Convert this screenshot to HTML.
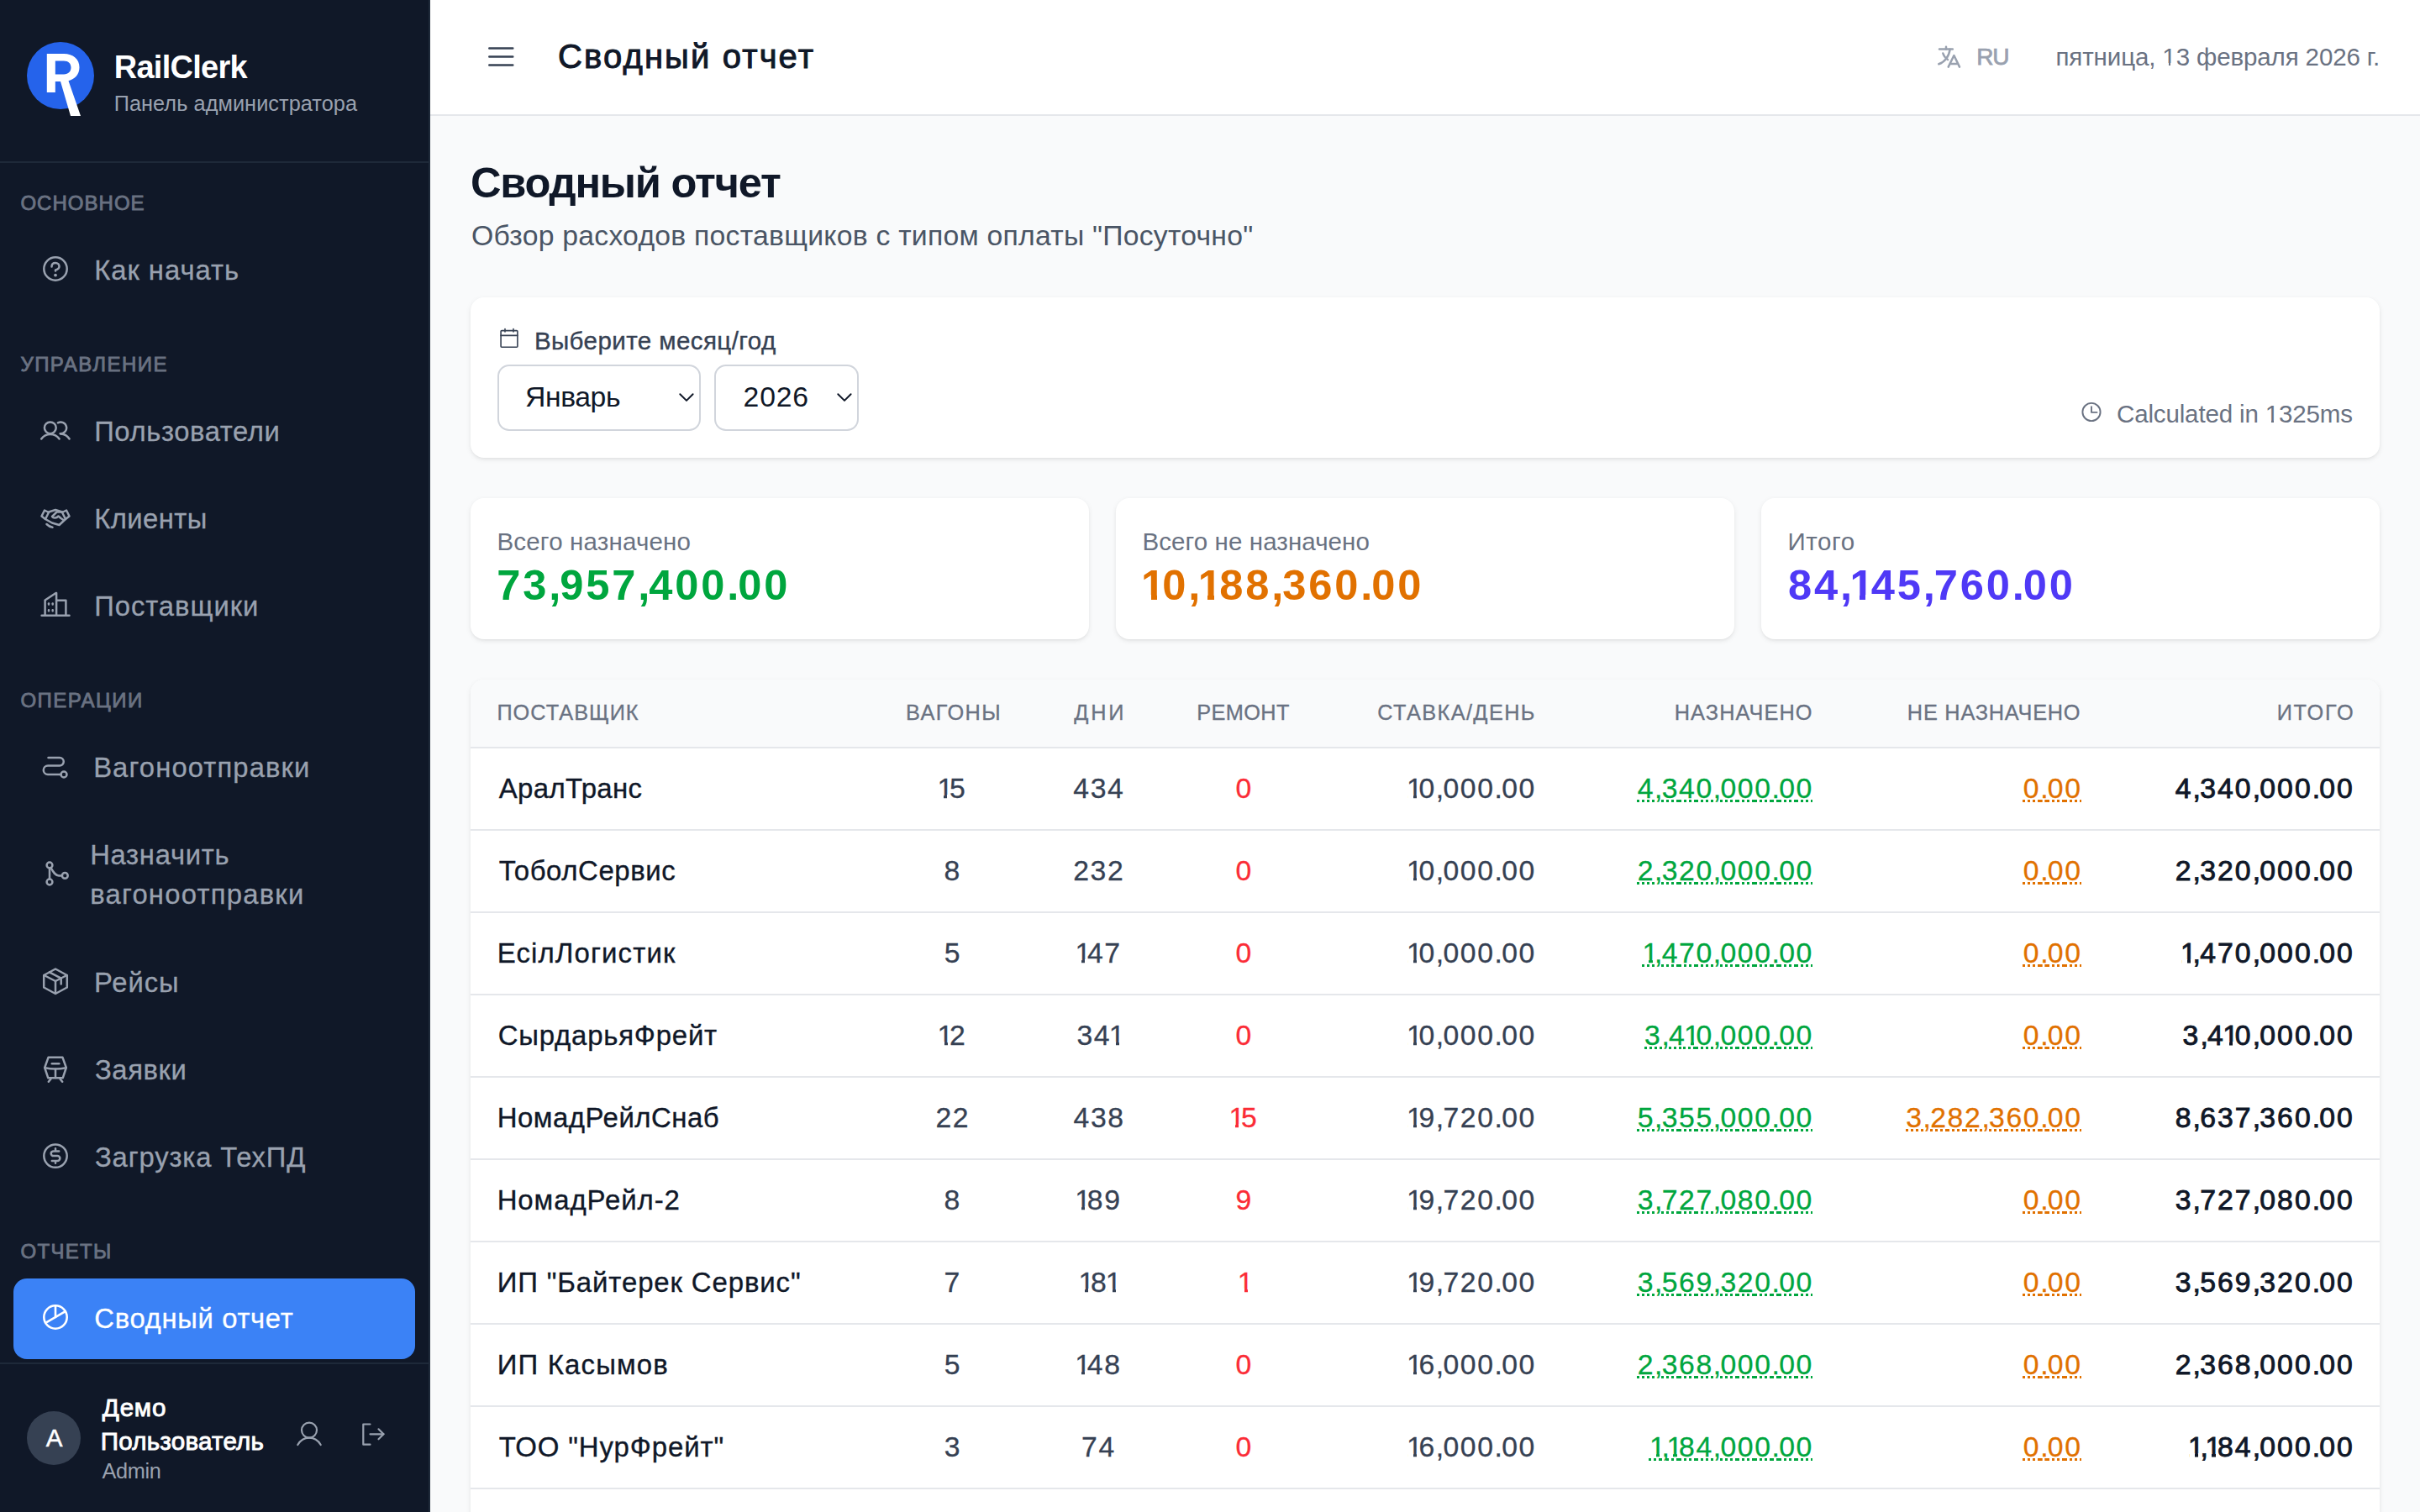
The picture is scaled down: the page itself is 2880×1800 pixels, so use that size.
<!DOCTYPE html>
<html><head><meta charset="utf-8"><title>RailClerk</title>
<style>
html,body{margin:0;padding:0;width:2880px;height:1800px;overflow:hidden;background:#f9fafb}
body{position:relative;font-family:"Liberation Sans",sans-serif}
.t{position:absolute;white-space:nowrap}
.one,.ones,.oneb,.p{position:relative}
.one::before,.one::after,.ones::before,.ones::after,.oneb::before,.oneb::after{content:'';position:absolute;background:#fff}
.one::before{left:0.05em;width:0.198em;top:0.822em;height:0.1em}
.one::after{left:0.342em;width:0.2em;top:0.822em;height:0.1em}
.ones::before{left:0.05em;width:0.185em;top:0.805em;height:0.125em}
.ones::after{left:0.356em;width:0.2em;top:0.805em;height:0.125em}
.oneb::before{left:0.03em;width:0.2em;top:0.795em;height:0.125em}
.oneb::after{left:0.373em;width:0.2em;top:0.795em;height:0.125em}
@media (max-width:2000px){html{zoom:0.5}}
</style></head><body>
<div style="position:absolute;left:0px;top:0px;width:510px;height:1800px;background:#101828"></div>
<div style="position:absolute;left:510px;top:0px;width:2px;height:1800px;background:#1e2939"></div>
<div style="position:absolute;left:512px;top:0px;width:2368px;height:136px;background:#fff"></div>
<div style="position:absolute;left:512px;top:136px;width:2368px;height:2px;background:#e5e7eb"></div>
<div style="position:absolute;left:512px;top:138px;width:2368px;height:1662px;background:#f9fafb"></div>
<div style="position:absolute;left:0px;top:192px;width:510px;height:2px;background:#1e2939"></div>
<div style="position:absolute;left:0px;top:1622px;width:510px;height:2px;background:#1e2939"></div>
<div class="t" style="left:135.70px;top:61.43px;font-size:37.98px;line-height:37.98px;color:#fff;letter-spacing:-0.712px;font-weight:700;">RailClerk</div>
<div class="t" style="left:135.70px;top:110.55px;font-size:25.32px;line-height:25.32px;color:#99a1af;letter-spacing:0.050px;">Панель администратора</div>
<div class="t" style="left:24.43px;top:230.07px;font-size:24.0px;line-height:24.0px;color:#6a7282;letter-spacing:1.021px;-webkit-text-stroke:0.85px #6a7282;">ОСНОВНОЕ</div>
<div class="t" style="left:24.43px;top:422.07px;font-size:24.0px;line-height:24.0px;color:#6a7282;letter-spacing:1.461px;-webkit-text-stroke:0.85px #6a7282;">УПРАВЛЕНИЕ</div>
<div class="t" style="left:24.43px;top:821.97px;font-size:24.0px;line-height:24.0px;color:#6a7282;letter-spacing:1.450px;-webkit-text-stroke:0.85px #6a7282;">ОПЕРАЦИИ</div>
<div class="t" style="left:24.43px;top:1477.97px;font-size:24.0px;line-height:24.0px;color:#6a7282;letter-spacing:1.330px;-webkit-text-stroke:0.85px #6a7282;">ОТЧЕТЫ</div>
<div class="t" style="left:112.15px;top:305.62px;font-size:32.8px;line-height:32.8px;color:#99a1af;letter-spacing:0.967px;-webkit-text-stroke:0.3px #99a1af;">Как начать</div>
<div class="t" style="left:112.15px;top:497.62px;font-size:32.8px;line-height:32.8px;color:#99a1af;letter-spacing:0.609px;-webkit-text-stroke:0.3px #99a1af;">Пользователи</div>
<div class="t" style="left:112.15px;top:601.62px;font-size:32.8px;line-height:32.8px;color:#99a1af;letter-spacing:0.450px;-webkit-text-stroke:0.3px #99a1af;">Клиенты</div>
<div class="t" style="left:112.15px;top:705.62px;font-size:32.8px;line-height:32.8px;color:#99a1af;letter-spacing:0.967px;-webkit-text-stroke:0.3px #99a1af;">Поставщики</div>
<div class="t" style="left:111.15px;top:897.92px;font-size:32.8px;line-height:32.8px;color:#99a1af;letter-spacing:1.108px;-webkit-text-stroke:0.3px #99a1af;">Вагоноотправки</div>
<div class="t" style="left:107.15px;top:1001.82px;font-size:32.8px;line-height:32.8px;color:#99a1af;letter-spacing:0.712px;-webkit-text-stroke:0.3px #99a1af;">Назначить</div>
<div class="t" style="left:107.15px;top:1049.42px;font-size:32.8px;line-height:32.8px;color:#99a1af;letter-spacing:1.238px;-webkit-text-stroke:0.3px #99a1af;">вагоноотправки</div>
<div class="t" style="left:111.95px;top:1154.02px;font-size:32.8px;line-height:32.8px;color:#99a1af;letter-spacing:0.925px;-webkit-text-stroke:0.3px #99a1af;">Рейсы</div>
<div class="t" style="left:112.95px;top:1257.92px;font-size:32.8px;line-height:32.8px;color:#99a1af;letter-spacing:0.580px;-webkit-text-stroke:0.3px #99a1af;">Заявки</div>
<div class="t" style="left:112.95px;top:1361.92px;font-size:32.8px;line-height:32.8px;color:#99a1af;letter-spacing:0.838px;-webkit-text-stroke:0.3px #99a1af;">Загрузка ТехПД</div>
<div style="position:absolute;left:16px;top:1522px;width:478px;height:96px;background:#3b82f6;border-radius:16px"></div>
<div class="t" style="left:112.35px;top:1553.82px;font-size:32.8px;line-height:32.8px;color:#fff;letter-spacing:0.667px;-webkit-text-stroke:0.3px #fff;">Сводный отчет</div>
<div style="position:absolute;left:32px;top:1680px;width:64px;height:64px;border-radius:50%;background:#364153"></div>
<div class="t" style="left:54.65px;top:1696.98px;font-size:29.54px;line-height:29.54px;color:#fff;letter-spacing:0.000px;-webkit-text-stroke:0.5px #fff;">A</div>
<div class="t" style="left:121.85px;top:1661.28px;font-size:29.54px;line-height:29.54px;color:#fff;letter-spacing:0.800px;-webkit-text-stroke:0.9px #fff;">Демо</div>
<div class="t" style="left:119.85px;top:1700.58px;font-size:29.54px;line-height:29.54px;color:#fff;letter-spacing:0.218px;-webkit-text-stroke:0.9px #fff;">Пользователь</div>
<div class="t" style="left:121.40px;top:1738.55px;font-size:25.32px;line-height:25.32px;color:#99a1af;letter-spacing:-0.300px;">Admin</div>
<div class="t" style="left:664.00px;top:47.02px;font-size:40.0px;line-height:40.0px;color:#101828;letter-spacing:2.125px;-webkit-text-stroke:1.0px #101828;">Сводный отчет</div>
<div class="t" style="left:2352.28px;top:54.08px;font-size:28.0px;line-height:28.0px;color:#99a1af;letter-spacing:-1.150px;-webkit-text-stroke:0.75px #99a1af;">RU</div>
<div class="t" style="left:2446.50px;top:52.78px;font-size:29.54px;line-height:29.54px;color:#6a7282;letter-spacing:-0.135px;">пятница, <span class="one">1</span>3 февраля 2026 г.</div>
<div class="t" style="left:560.00px;top:193.11px;font-size:50.64px;line-height:50.64px;color:#101828;letter-spacing:-1.225px;font-weight:700;">Сводный отчет</div>
<div class="t" style="left:561.00px;top:264.41px;font-size:33.76px;line-height:33.76px;color:#4a5565;letter-spacing:0.235px;">Обзор расходов поставщиков с типом оплаты &quot;Посуточно&quot;</div>
<div style="position:absolute;left:560px;top:354px;width:2272px;height:191px;background:#fff;border-radius:16px;box-shadow:0 2px 6px rgba(0,0,0,0.08),0 2px 4px -2px rgba(0,0,0,0.08)"></div>
<div class="t" style="left:635.88px;top:390.68px;font-size:29.54px;line-height:29.54px;color:#364153;letter-spacing:0.409px;-webkit-text-stroke:0.35px #364153;">Выберите месяц/год</div>
<div style="position:absolute;left:592px;top:434px;width:242px;height:79px;border:2px solid #d1d5dc;border-radius:14px;box-sizing:border-box;background:#fff"></div>
<div style="position:absolute;left:850px;top:434px;width:172px;height:79px;border:2px solid #d1d5dc;border-radius:14px;box-sizing:border-box;background:#fff"></div>
<div class="t" style="left:625.00px;top:456.41px;font-size:33.76px;line-height:33.76px;color:#101828;letter-spacing:-0.440px;">Январь</div>
<div class="t" style="left:884.60px;top:456.41px;font-size:33.76px;line-height:33.76px;color:#101828;letter-spacing:0.800px;">2026</div>
<div class="t" style="left:2519.00px;top:477.98px;font-size:29.54px;line-height:29.54px;color:#6a7282;letter-spacing:-0.158px;">Calculated in <span class="one">1</span>325ms</div>
<div style="position:absolute;left:560px;top:593px;width:736px;height:168px;background:#fff;border-radius:16px;box-shadow:0 2px 6px rgba(0,0,0,0.08),0 2px 4px -2px rgba(0,0,0,0.08)"></div>
<div class="t" style="left:591.50px;top:629.98px;font-size:29.54px;line-height:29.54px;color:#6a7282;letter-spacing:0.157px;">Всего назначено</div>
<div class="t" style="left:591.32px;top:672.11px;font-size:50.64px;line-height:50.64px;color:#00a63e;letter-spacing:2.84px;font-weight:700;"><span class="p">7</span><span class="p">3</span><span class="p" style="letter-spacing:-1.08px">,</span><span class="p">9</span><span class="p">5</span><span class="p">7</span><span class="p" style="letter-spacing:-1.08px">,</span><span class="p">4</span><span class="p">0</span><span class="p">0</span><span class="p" style="letter-spacing:-1.08px">.</span><span class="p">0</span><span class="p">0</span></div>
<div style="position:absolute;left:1328px;top:593px;width:736px;height:168px;background:#fff;border-radius:16px;box-shadow:0 2px 6px rgba(0,0,0,0.08),0 2px 4px -2px rgba(0,0,0,0.08)"></div>
<div class="t" style="left:1359.50px;top:629.98px;font-size:29.54px;line-height:29.54px;color:#6a7282;letter-spacing:0.076px;">Всего не назначено</div>
<div class="t" style="left:1359.56px;top:672.11px;font-size:50.64px;line-height:50.64px;color:#e17100;letter-spacing:2.84px;font-weight:700;"><span class="oneb" style="margin-left:-1.5px;letter-spacing:-2.86px">1</span><span class="p">0</span><span class="p" style="letter-spacing:-1.08px">,</span><span class="oneb" style="margin-left:-1.5px;letter-spacing:-2.86px">1</span><span class="p">8</span><span class="p">8</span><span class="p" style="letter-spacing:-1.08px">,</span><span class="p">3</span><span class="p">6</span><span class="p">0</span><span class="p" style="letter-spacing:-1.08px">.</span><span class="p">0</span><span class="p">0</span></div>
<div style="position:absolute;left:2096px;top:593px;width:736px;height:168px;background:#fff;border-radius:16px;box-shadow:0 2px 6px rgba(0,0,0,0.08),0 2px 4px -2px rgba(0,0,0,0.08)"></div>
<div class="t" style="left:2127.50px;top:629.98px;font-size:29.54px;line-height:29.54px;color:#6a7282;letter-spacing:0.575px;">Итого</div>
<div class="t" style="left:2127.88px;top:672.11px;font-size:50.64px;line-height:50.64px;color:#4f39f6;letter-spacing:2.84px;font-weight:700;"><span class="p">8</span><span class="p">4</span><span class="p" style="letter-spacing:-1.08px">,</span><span class="oneb" style="margin-left:-1.5px;letter-spacing:-2.86px">1</span><span class="p">4</span><span class="p">5</span><span class="p" style="letter-spacing:-1.08px">,</span><span class="p">7</span><span class="p">6</span><span class="p">0</span><span class="p" style="letter-spacing:-1.08px">.</span><span class="p">0</span><span class="p">0</span></div>
<div style="position:absolute;left:560px;top:809px;width:2272px;height:1091px;background:#fff;border-radius:16px;overflow:hidden;box-shadow:0 2px 6px rgba(0,0,0,0.08),0 2px 4px -2px rgba(0,0,0,0.08)"></div>
<div style="position:absolute;left:560px;top:809px;width:2272px;height:80px;background:#f9fafb;border-radius:16px 16px 0 0"></div>
<div style="position:absolute;left:560px;top:889px;width:2272px;height:2px;background:#e5e7eb"></div>
<div class="t" style="left:591.45px;top:835.75px;font-size:25.32px;line-height:25.32px;color:#6a7282;letter-spacing:0.975px;-webkit-text-stroke:0.3px #6a7282;">ПОСТАВЩИК</div>
<div class="t" style="left:1077.95px;top:835.75px;font-size:25.32px;line-height:25.32px;color:#6a7282;letter-spacing:1.420px;-webkit-text-stroke:0.3px #6a7282;">ВАГОНЫ</div>
<div class="t" style="left:1278.15px;top:835.75px;font-size:25.32px;line-height:25.32px;color:#6a7282;letter-spacing:2.850px;-webkit-text-stroke:0.3px #6a7282;">ДНИ</div>
<div class="t" style="left:1424.30px;top:835.75px;font-size:25.32px;line-height:25.32px;color:#6a7282;letter-spacing:0.360px;-webkit-text-stroke:0.3px #6a7282;">РЕМОНТ</div>
<div class="t" style="left:1639.15px;top:835.75px;font-size:25.32px;line-height:25.32px;color:#6a7282;letter-spacing:1.390px;-webkit-text-stroke:0.3px #6a7282;">СТАВКА/ДЕНЬ</div>
<div class="t" style="left:1992.75px;top:835.75px;font-size:25.32px;line-height:25.32px;color:#6a7282;letter-spacing:1.075px;-webkit-text-stroke:0.3px #6a7282;">НАЗНАЧЕНО</div>
<div class="t" style="left:2269.85px;top:835.75px;font-size:25.32px;line-height:25.32px;color:#6a7282;letter-spacing:0.764px;-webkit-text-stroke:0.3px #6a7282;">НЕ НАЗНАЧЕНО</div>
<div class="t" style="left:2709.75px;top:835.75px;font-size:25.32px;line-height:25.32px;color:#6a7282;letter-spacing:1.675px;-webkit-text-stroke:0.3px #6a7282;">ИТОГО</div>
<div class="t" style="left:593.67px;top:922.78px;font-size:32.96px;line-height:32.96px;color:#101828;letter-spacing:0.369px;-webkit-text-stroke:0.35px #101828;">АралТранс</div>
<div class="t" style="left:1117.95px;top:922.11px;font-size:33.76px;line-height:33.76px;color:#364153;letter-spacing:1.62px;-webkit-text-stroke:0.3px #364153;"><span class="ones" style="margin-left:-2.5px;letter-spacing:-4.28px">1</span><span class="p">5</span></div>
<div class="t" style="left:1277.32px;top:922.11px;font-size:33.76px;line-height:33.76px;color:#364153;letter-spacing:1.62px;-webkit-text-stroke:0.3px #364153;"><span class="p">4</span><span class="p">3</span><span class="p">4</span></div>
<div class="t" style="left:1470.61px;top:922.11px;font-size:33.76px;line-height:33.76px;color:#fb2c36;letter-spacing:1.62px;-webkit-text-stroke:0.3px #fb2c36;"><span class="p">0</span></div>
<div class="t" style="left:1676.42px;top:922.11px;font-size:33.76px;line-height:33.76px;color:#364153;letter-spacing:1.62px;-webkit-text-stroke:0.3px #364153;"><span class="ones" style="margin-left:-2.5px;letter-spacing:-4.28px">1</span><span class="p">0</span><span class="p" style="letter-spacing:-0.78px">,</span><span class="p">0</span><span class="p">0</span><span class="p">0</span><span class="p" style="letter-spacing:-0.78px">.</span><span class="p">0</span><span class="p">0</span></div>
<div class="t" style="left:1948.63px;top:922.11px;font-size:33.76px;line-height:33.76px;color:#00a63e;letter-spacing:1.62px;-webkit-text-stroke:0.3px #00a63e;text-decoration:underline dotted;text-decoration-thickness:3px;text-underline-offset:2px;"><span class="p">4</span><span class="p" style="letter-spacing:-0.78px">,</span><span class="p">3</span><span class="p">4</span><span class="p">0</span><span class="p" style="letter-spacing:-0.78px">,</span><span class="p">0</span><span class="p">0</span><span class="p">0</span><span class="p" style="letter-spacing:-0.78px">.</span><span class="p">0</span><span class="p">0</span></div>
<div class="t" style="left:2407.80px;top:922.11px;font-size:33.76px;line-height:33.76px;color:#e17100;letter-spacing:1.62px;-webkit-text-stroke:0.3px #e17100;text-decoration:underline dotted;text-decoration-thickness:3px;text-underline-offset:2px;"><span class="p">0</span><span class="p" style="letter-spacing:-0.78px">.</span><span class="p">0</span><span class="p">0</span></div>
<div class="t" style="left:2588.75px;top:922.11px;font-size:33.76px;line-height:33.76px;color:#101828;letter-spacing:2.05px;-webkit-text-stroke:0.9px #101828;"><span class="p">4</span><span class="p" style="letter-spacing:-0.80px">,</span><span class="p">3</span><span class="p">4</span><span class="p">0</span><span class="p" style="letter-spacing:-0.80px">,</span><span class="p">0</span><span class="p">0</span><span class="p">0</span><span class="p" style="letter-spacing:-0.80px">.</span><span class="p">0</span><span class="p">0</span></div>
<div style="position:absolute;left:560px;top:987px;width:2272px;height:2px;background:#e5e7eb"></div>
<div class="t" style="left:593.67px;top:1020.78px;font-size:32.96px;line-height:32.96px;color:#101828;letter-spacing:0.565px;-webkit-text-stroke:0.35px #101828;">ТоболСервис</div>
<div class="t" style="left:1123.61px;top:1020.11px;font-size:33.76px;line-height:33.76px;color:#364153;letter-spacing:1.62px;-webkit-text-stroke:0.3px #364153;"><span class="p">8</span></div>
<div class="t" style="left:1277.22px;top:1020.11px;font-size:33.76px;line-height:33.76px;color:#364153;letter-spacing:1.62px;-webkit-text-stroke:0.3px #364153;"><span class="p">2</span><span class="p">3</span><span class="p">2</span></div>
<div class="t" style="left:1470.61px;top:1020.11px;font-size:33.76px;line-height:33.76px;color:#fb2c36;letter-spacing:1.62px;-webkit-text-stroke:0.3px #fb2c36;"><span class="p">0</span></div>
<div class="t" style="left:1676.42px;top:1020.11px;font-size:33.76px;line-height:33.76px;color:#364153;letter-spacing:1.62px;-webkit-text-stroke:0.3px #364153;"><span class="ones" style="margin-left:-2.5px;letter-spacing:-4.28px">1</span><span class="p">0</span><span class="p" style="letter-spacing:-0.78px">,</span><span class="p">0</span><span class="p">0</span><span class="p">0</span><span class="p" style="letter-spacing:-0.78px">.</span><span class="p">0</span><span class="p">0</span></div>
<div class="t" style="left:1948.63px;top:1020.11px;font-size:33.76px;line-height:33.76px;color:#00a63e;letter-spacing:1.62px;-webkit-text-stroke:0.3px #00a63e;text-decoration:underline dotted;text-decoration-thickness:3px;text-underline-offset:2px;"><span class="p">2</span><span class="p" style="letter-spacing:-0.78px">,</span><span class="p">3</span><span class="p">2</span><span class="p">0</span><span class="p" style="letter-spacing:-0.78px">,</span><span class="p">0</span><span class="p">0</span><span class="p">0</span><span class="p" style="letter-spacing:-0.78px">.</span><span class="p">0</span><span class="p">0</span></div>
<div class="t" style="left:2407.80px;top:1020.11px;font-size:33.76px;line-height:33.76px;color:#e17100;letter-spacing:1.62px;-webkit-text-stroke:0.3px #e17100;text-decoration:underline dotted;text-decoration-thickness:3px;text-underline-offset:2px;"><span class="p">0</span><span class="p" style="letter-spacing:-0.78px">.</span><span class="p">0</span><span class="p">0</span></div>
<div class="t" style="left:2588.75px;top:1020.11px;font-size:33.76px;line-height:33.76px;color:#101828;letter-spacing:2.05px;-webkit-text-stroke:0.9px #101828;"><span class="p">2</span><span class="p" style="letter-spacing:-0.80px">,</span><span class="p">3</span><span class="p">2</span><span class="p">0</span><span class="p" style="letter-spacing:-0.80px">,</span><span class="p">0</span><span class="p">0</span><span class="p">0</span><span class="p" style="letter-spacing:-0.80px">.</span><span class="p">0</span><span class="p">0</span></div>
<div style="position:absolute;left:560px;top:1085px;width:2272px;height:2px;background:#e5e7eb"></div>
<div class="t" style="left:591.67px;top:1118.78px;font-size:32.96px;line-height:32.96px;color:#101828;letter-spacing:1.114px;-webkit-text-stroke:0.35px #101828;">ЕсілЛогистик</div>
<div class="t" style="left:1123.65px;top:1118.11px;font-size:33.76px;line-height:33.76px;color:#364153;letter-spacing:1.62px;-webkit-text-stroke:0.3px #364153;"><span class="p">5</span></div>
<div class="t" style="left:1281.89px;top:1118.11px;font-size:33.76px;line-height:33.76px;color:#364153;letter-spacing:1.62px;-webkit-text-stroke:0.3px #364153;"><span class="ones" style="margin-left:-2.5px;letter-spacing:-4.28px">1</span><span class="p">4</span><span class="p">7</span></div>
<div class="t" style="left:1470.61px;top:1118.11px;font-size:33.76px;line-height:33.76px;color:#fb2c36;letter-spacing:1.62px;-webkit-text-stroke:0.3px #fb2c36;"><span class="p">0</span></div>
<div class="t" style="left:1676.42px;top:1118.11px;font-size:33.76px;line-height:33.76px;color:#364153;letter-spacing:1.62px;-webkit-text-stroke:0.3px #364153;"><span class="ones" style="margin-left:-2.5px;letter-spacing:-4.28px">1</span><span class="p">0</span><span class="p" style="letter-spacing:-0.78px">,</span><span class="p">0</span><span class="p">0</span><span class="p">0</span><span class="p" style="letter-spacing:-0.78px">.</span><span class="p">0</span><span class="p">0</span></div>
<div class="t" style="left:1957.03px;top:1118.11px;font-size:33.76px;line-height:33.76px;color:#00a63e;letter-spacing:1.62px;-webkit-text-stroke:0.3px #00a63e;text-decoration:underline dotted;text-decoration-thickness:3px;text-underline-offset:2px;"><span class="ones" style="margin-left:-2.5px;letter-spacing:-4.28px">1</span><span class="p" style="letter-spacing:-0.78px">,</span><span class="p">4</span><span class="p">7</span><span class="p">0</span><span class="p" style="letter-spacing:-0.78px">,</span><span class="p">0</span><span class="p">0</span><span class="p">0</span><span class="p" style="letter-spacing:-0.78px">.</span><span class="p">0</span><span class="p">0</span></div>
<div class="t" style="left:2407.80px;top:1118.11px;font-size:33.76px;line-height:33.76px;color:#e17100;letter-spacing:1.62px;-webkit-text-stroke:0.3px #e17100;text-decoration:underline dotted;text-decoration-thickness:3px;text-underline-offset:2px;"><span class="p">0</span><span class="p" style="letter-spacing:-0.78px">.</span><span class="p">0</span><span class="p">0</span></div>
<div class="t" style="left:2597.58px;top:1118.11px;font-size:33.76px;line-height:33.76px;color:#101828;letter-spacing:2.05px;-webkit-text-stroke:0.9px #101828;"><span class="ones" style="margin-left:-2.5px;letter-spacing:-4.28px">1</span><span class="p" style="letter-spacing:-0.80px">,</span><span class="p">4</span><span class="p">7</span><span class="p">0</span><span class="p" style="letter-spacing:-0.80px">,</span><span class="p">0</span><span class="p">0</span><span class="p">0</span><span class="p" style="letter-spacing:-0.80px">.</span><span class="p">0</span><span class="p">0</span></div>
<div style="position:absolute;left:560px;top:1183px;width:2272px;height:2px;background:#e5e7eb"></div>
<div class="t" style="left:592.67px;top:1216.78px;font-size:32.96px;line-height:32.96px;color:#101828;letter-spacing:0.779px;-webkit-text-stroke:0.35px #101828;">СырдарьяФрейт</div>
<div class="t" style="left:1118.09px;top:1216.11px;font-size:33.76px;line-height:33.76px;color:#364153;letter-spacing:1.62px;-webkit-text-stroke:0.3px #364153;"><span class="ones" style="margin-left:-2.5px;letter-spacing:-4.28px">1</span><span class="p">2</span></div>
<div class="t" style="left:1281.47px;top:1216.11px;font-size:33.76px;line-height:33.76px;color:#364153;letter-spacing:1.62px;-webkit-text-stroke:0.3px #364153;"><span class="p">3</span><span class="p">4</span><span class="ones" style="margin-left:-2.5px;letter-spacing:-4.28px">1</span></div>
<div class="t" style="left:1470.61px;top:1216.11px;font-size:33.76px;line-height:33.76px;color:#fb2c36;letter-spacing:1.62px;-webkit-text-stroke:0.3px #fb2c36;"><span class="p">0</span></div>
<div class="t" style="left:1676.42px;top:1216.11px;font-size:33.76px;line-height:33.76px;color:#364153;letter-spacing:1.62px;-webkit-text-stroke:0.3px #364153;"><span class="ones" style="margin-left:-2.5px;letter-spacing:-4.28px">1</span><span class="p">0</span><span class="p" style="letter-spacing:-0.78px">,</span><span class="p">0</span><span class="p">0</span><span class="p">0</span><span class="p" style="letter-spacing:-0.78px">.</span><span class="p">0</span><span class="p">0</span></div>
<div class="t" style="left:1957.03px;top:1216.11px;font-size:33.76px;line-height:33.76px;color:#00a63e;letter-spacing:1.62px;-webkit-text-stroke:0.3px #00a63e;text-decoration:underline dotted;text-decoration-thickness:3px;text-underline-offset:2px;"><span class="p">3</span><span class="p" style="letter-spacing:-0.78px">,</span><span class="p">4</span><span class="ones" style="margin-left:-2.5px;letter-spacing:-4.28px">1</span><span class="p">0</span><span class="p" style="letter-spacing:-0.78px">,</span><span class="p">0</span><span class="p">0</span><span class="p">0</span><span class="p" style="letter-spacing:-0.78px">.</span><span class="p">0</span><span class="p">0</span></div>
<div class="t" style="left:2407.80px;top:1216.11px;font-size:33.76px;line-height:33.76px;color:#e17100;letter-spacing:1.62px;-webkit-text-stroke:0.3px #e17100;text-decoration:underline dotted;text-decoration-thickness:3px;text-underline-offset:2px;"><span class="p">0</span><span class="p" style="letter-spacing:-0.78px">.</span><span class="p">0</span><span class="p">0</span></div>
<div class="t" style="left:2597.58px;top:1216.11px;font-size:33.76px;line-height:33.76px;color:#101828;letter-spacing:2.05px;-webkit-text-stroke:0.9px #101828;"><span class="p">3</span><span class="p" style="letter-spacing:-0.80px">,</span><span class="p">4</span><span class="ones" style="margin-left:-2.5px;letter-spacing:-4.28px">1</span><span class="p">0</span><span class="p" style="letter-spacing:-0.80px">,</span><span class="p">0</span><span class="p">0</span><span class="p">0</span><span class="p" style="letter-spacing:-0.80px">.</span><span class="p">0</span><span class="p">0</span></div>
<div style="position:absolute;left:560px;top:1281px;width:2272px;height:2px;background:#e5e7eb"></div>
<div class="t" style="left:591.67px;top:1314.78px;font-size:32.96px;line-height:32.96px;color:#101828;letter-spacing:0.504px;-webkit-text-stroke:0.35px #101828;">НомадРейлСнаб</div>
<div class="t" style="left:1113.41px;top:1314.11px;font-size:33.76px;line-height:33.76px;color:#364153;letter-spacing:1.62px;-webkit-text-stroke:0.3px #364153;"><span class="p">2</span><span class="p">2</span></div>
<div class="t" style="left:1277.55px;top:1314.11px;font-size:33.76px;line-height:33.76px;color:#364153;letter-spacing:1.62px;-webkit-text-stroke:0.3px #364153;"><span class="p">4</span><span class="p">3</span><span class="p">8</span></div>
<div class="t" style="left:1464.95px;top:1314.11px;font-size:33.76px;line-height:33.76px;color:#fb2c36;letter-spacing:1.62px;-webkit-text-stroke:0.3px #fb2c36;"><span class="ones" style="margin-left:-2.5px;letter-spacing:-4.28px">1</span><span class="p">5</span></div>
<div class="t" style="left:1676.42px;top:1314.11px;font-size:33.76px;line-height:33.76px;color:#364153;letter-spacing:1.62px;-webkit-text-stroke:0.3px #364153;"><span class="ones" style="margin-left:-2.5px;letter-spacing:-4.28px">1</span><span class="p">9</span><span class="p" style="letter-spacing:-0.78px">,</span><span class="p">7</span><span class="p">2</span><span class="p">0</span><span class="p" style="letter-spacing:-0.78px">.</span><span class="p">0</span><span class="p">0</span></div>
<div class="t" style="left:1948.63px;top:1314.11px;font-size:33.76px;line-height:33.76px;color:#00a63e;letter-spacing:1.62px;-webkit-text-stroke:0.3px #00a63e;text-decoration:underline dotted;text-decoration-thickness:3px;text-underline-offset:2px;"><span class="p">5</span><span class="p" style="letter-spacing:-0.78px">,</span><span class="p">3</span><span class="p">5</span><span class="p">5</span><span class="p" style="letter-spacing:-0.78px">,</span><span class="p">0</span><span class="p">0</span><span class="p">0</span><span class="p" style="letter-spacing:-0.78px">.</span><span class="p">0</span><span class="p">0</span></div>
<div class="t" style="left:2268.23px;top:1314.11px;font-size:33.76px;line-height:33.76px;color:#e17100;letter-spacing:1.62px;-webkit-text-stroke:0.3px #e17100;text-decoration:underline dotted;text-decoration-thickness:3px;text-underline-offset:2px;"><span class="p">3</span><span class="p" style="letter-spacing:-0.78px">,</span><span class="p">2</span><span class="p">8</span><span class="p">2</span><span class="p" style="letter-spacing:-0.78px">,</span><span class="p">3</span><span class="p">6</span><span class="p">0</span><span class="p" style="letter-spacing:-0.78px">.</span><span class="p">0</span><span class="p">0</span></div>
<div class="t" style="left:2588.75px;top:1314.11px;font-size:33.76px;line-height:33.76px;color:#101828;letter-spacing:2.05px;-webkit-text-stroke:0.9px #101828;"><span class="p">8</span><span class="p" style="letter-spacing:-0.80px">,</span><span class="p">6</span><span class="p">3</span><span class="p">7</span><span class="p" style="letter-spacing:-0.80px">,</span><span class="p">3</span><span class="p">6</span><span class="p">0</span><span class="p" style="letter-spacing:-0.80px">.</span><span class="p">0</span><span class="p">0</span></div>
<div style="position:absolute;left:560px;top:1379px;width:2272px;height:2px;background:#e5e7eb"></div>
<div class="t" style="left:591.67px;top:1412.78px;font-size:32.96px;line-height:32.96px;color:#101828;letter-spacing:0.915px;-webkit-text-stroke:0.35px #101828;">НомадРейл-2</div>
<div class="t" style="left:1123.61px;top:1412.11px;font-size:33.76px;line-height:33.76px;color:#364153;letter-spacing:1.62px;-webkit-text-stroke:0.3px #364153;"><span class="p">8</span></div>
<div class="t" style="left:1281.84px;top:1412.11px;font-size:33.76px;line-height:33.76px;color:#364153;letter-spacing:1.62px;-webkit-text-stroke:0.3px #364153;"><span class="ones" style="margin-left:-2.5px;letter-spacing:-4.28px">1</span><span class="p">8</span><span class="p">9</span></div>
<div class="t" style="left:1470.61px;top:1412.11px;font-size:33.76px;line-height:33.76px;color:#fb2c36;letter-spacing:1.62px;-webkit-text-stroke:0.3px #fb2c36;"><span class="p">9</span></div>
<div class="t" style="left:1676.42px;top:1412.11px;font-size:33.76px;line-height:33.76px;color:#364153;letter-spacing:1.62px;-webkit-text-stroke:0.3px #364153;"><span class="ones" style="margin-left:-2.5px;letter-spacing:-4.28px">1</span><span class="p">9</span><span class="p" style="letter-spacing:-0.78px">,</span><span class="p">7</span><span class="p">2</span><span class="p">0</span><span class="p" style="letter-spacing:-0.78px">.</span><span class="p">0</span><span class="p">0</span></div>
<div class="t" style="left:1948.63px;top:1412.11px;font-size:33.76px;line-height:33.76px;color:#00a63e;letter-spacing:1.62px;-webkit-text-stroke:0.3px #00a63e;text-decoration:underline dotted;text-decoration-thickness:3px;text-underline-offset:2px;"><span class="p">3</span><span class="p" style="letter-spacing:-0.78px">,</span><span class="p">7</span><span class="p">2</span><span class="p">7</span><span class="p" style="letter-spacing:-0.78px">,</span><span class="p">0</span><span class="p">8</span><span class="p">0</span><span class="p" style="letter-spacing:-0.78px">.</span><span class="p">0</span><span class="p">0</span></div>
<div class="t" style="left:2407.80px;top:1412.11px;font-size:33.76px;line-height:33.76px;color:#e17100;letter-spacing:1.62px;-webkit-text-stroke:0.3px #e17100;text-decoration:underline dotted;text-decoration-thickness:3px;text-underline-offset:2px;"><span class="p">0</span><span class="p" style="letter-spacing:-0.78px">.</span><span class="p">0</span><span class="p">0</span></div>
<div class="t" style="left:2588.75px;top:1412.11px;font-size:33.76px;line-height:33.76px;color:#101828;letter-spacing:2.05px;-webkit-text-stroke:0.9px #101828;"><span class="p">3</span><span class="p" style="letter-spacing:-0.80px">,</span><span class="p">7</span><span class="p">2</span><span class="p">7</span><span class="p" style="letter-spacing:-0.80px">,</span><span class="p">0</span><span class="p">8</span><span class="p">0</span><span class="p" style="letter-spacing:-0.80px">.</span><span class="p">0</span><span class="p">0</span></div>
<div style="position:absolute;left:560px;top:1477px;width:2272px;height:2px;background:#e5e7eb"></div>
<div class="t" style="left:591.67px;top:1510.78px;font-size:32.96px;line-height:32.96px;color:#101828;letter-spacing:0.871px;-webkit-text-stroke:0.35px #101828;">ИП &quot;Байтерек Сервис&quot;</div>
<div class="t" style="left:1123.60px;top:1510.11px;font-size:33.76px;line-height:33.76px;color:#364153;letter-spacing:1.62px;-webkit-text-stroke:0.3px #364153;"><span class="p">7</span></div>
<div class="t" style="left:1285.94px;top:1510.11px;font-size:33.76px;line-height:33.76px;color:#364153;letter-spacing:1.62px;-webkit-text-stroke:0.3px #364153;"><span class="ones" style="margin-left:-2.5px;letter-spacing:-4.28px">1</span><span class="p">8</span><span class="ones" style="margin-left:-2.5px;letter-spacing:-4.28px">1</span></div>
<div class="t" style="left:1475.14px;top:1510.11px;font-size:33.76px;line-height:33.76px;color:#fb2c36;letter-spacing:1.62px;-webkit-text-stroke:0.3px #fb2c36;"><span class="ones" style="margin-left:-2.5px;letter-spacing:-4.28px">1</span></div>
<div class="t" style="left:1676.42px;top:1510.11px;font-size:33.76px;line-height:33.76px;color:#364153;letter-spacing:1.62px;-webkit-text-stroke:0.3px #364153;"><span class="ones" style="margin-left:-2.5px;letter-spacing:-4.28px">1</span><span class="p">9</span><span class="p" style="letter-spacing:-0.78px">,</span><span class="p">7</span><span class="p">2</span><span class="p">0</span><span class="p" style="letter-spacing:-0.78px">.</span><span class="p">0</span><span class="p">0</span></div>
<div class="t" style="left:1948.63px;top:1510.11px;font-size:33.76px;line-height:33.76px;color:#00a63e;letter-spacing:1.62px;-webkit-text-stroke:0.3px #00a63e;text-decoration:underline dotted;text-decoration-thickness:3px;text-underline-offset:2px;"><span class="p">3</span><span class="p" style="letter-spacing:-0.78px">,</span><span class="p">5</span><span class="p">6</span><span class="p">9</span><span class="p" style="letter-spacing:-0.78px">,</span><span class="p">3</span><span class="p">2</span><span class="p">0</span><span class="p" style="letter-spacing:-0.78px">.</span><span class="p">0</span><span class="p">0</span></div>
<div class="t" style="left:2407.80px;top:1510.11px;font-size:33.76px;line-height:33.76px;color:#e17100;letter-spacing:1.62px;-webkit-text-stroke:0.3px #e17100;text-decoration:underline dotted;text-decoration-thickness:3px;text-underline-offset:2px;"><span class="p">0</span><span class="p" style="letter-spacing:-0.78px">.</span><span class="p">0</span><span class="p">0</span></div>
<div class="t" style="left:2588.75px;top:1510.11px;font-size:33.76px;line-height:33.76px;color:#101828;letter-spacing:2.05px;-webkit-text-stroke:0.9px #101828;"><span class="p">3</span><span class="p" style="letter-spacing:-0.80px">,</span><span class="p">5</span><span class="p">6</span><span class="p">9</span><span class="p" style="letter-spacing:-0.80px">,</span><span class="p">3</span><span class="p">2</span><span class="p">0</span><span class="p" style="letter-spacing:-0.80px">.</span><span class="p">0</span><span class="p">0</span></div>
<div style="position:absolute;left:560px;top:1575px;width:2272px;height:2px;background:#e5e7eb"></div>
<div class="t" style="left:591.67px;top:1608.78px;font-size:32.96px;line-height:32.96px;color:#101828;letter-spacing:1.161px;-webkit-text-stroke:0.35px #101828;">ИП Касымов</div>
<div class="t" style="left:1123.65px;top:1608.11px;font-size:33.76px;line-height:33.76px;color:#364153;letter-spacing:1.62px;-webkit-text-stroke:0.3px #364153;"><span class="p">5</span></div>
<div class="t" style="left:1281.77px;top:1608.11px;font-size:33.76px;line-height:33.76px;color:#364153;letter-spacing:1.62px;-webkit-text-stroke:0.3px #364153;"><span class="ones" style="margin-left:-2.5px;letter-spacing:-4.28px">1</span><span class="p">4</span><span class="p">8</span></div>
<div class="t" style="left:1470.61px;top:1608.11px;font-size:33.76px;line-height:33.76px;color:#fb2c36;letter-spacing:1.62px;-webkit-text-stroke:0.3px #fb2c36;"><span class="p">0</span></div>
<div class="t" style="left:1676.42px;top:1608.11px;font-size:33.76px;line-height:33.76px;color:#364153;letter-spacing:1.62px;-webkit-text-stroke:0.3px #364153;"><span class="ones" style="margin-left:-2.5px;letter-spacing:-4.28px">1</span><span class="p">6</span><span class="p" style="letter-spacing:-0.78px">,</span><span class="p">0</span><span class="p">0</span><span class="p">0</span><span class="p" style="letter-spacing:-0.78px">.</span><span class="p">0</span><span class="p">0</span></div>
<div class="t" style="left:1948.63px;top:1608.11px;font-size:33.76px;line-height:33.76px;color:#00a63e;letter-spacing:1.62px;-webkit-text-stroke:0.3px #00a63e;text-decoration:underline dotted;text-decoration-thickness:3px;text-underline-offset:2px;"><span class="p">2</span><span class="p" style="letter-spacing:-0.78px">,</span><span class="p">3</span><span class="p">6</span><span class="p">8</span><span class="p" style="letter-spacing:-0.78px">,</span><span class="p">0</span><span class="p">0</span><span class="p">0</span><span class="p" style="letter-spacing:-0.78px">.</span><span class="p">0</span><span class="p">0</span></div>
<div class="t" style="left:2407.80px;top:1608.11px;font-size:33.76px;line-height:33.76px;color:#e17100;letter-spacing:1.62px;-webkit-text-stroke:0.3px #e17100;text-decoration:underline dotted;text-decoration-thickness:3px;text-underline-offset:2px;"><span class="p">0</span><span class="p" style="letter-spacing:-0.78px">.</span><span class="p">0</span><span class="p">0</span></div>
<div class="t" style="left:2588.75px;top:1608.11px;font-size:33.76px;line-height:33.76px;color:#101828;letter-spacing:2.05px;-webkit-text-stroke:0.9px #101828;"><span class="p">2</span><span class="p" style="letter-spacing:-0.80px">,</span><span class="p">3</span><span class="p">6</span><span class="p">8</span><span class="p" style="letter-spacing:-0.80px">,</span><span class="p">0</span><span class="p">0</span><span class="p">0</span><span class="p" style="letter-spacing:-0.80px">.</span><span class="p">0</span><span class="p">0</span></div>
<div style="position:absolute;left:560px;top:1673px;width:2272px;height:2px;background:#e5e7eb"></div>
<div class="t" style="left:593.67px;top:1706.78px;font-size:32.96px;line-height:32.96px;color:#101828;letter-spacing:0.888px;-webkit-text-stroke:0.35px #101828;">ТОО &quot;НурФрейт&quot;</div>
<div class="t" style="left:1123.71px;top:1706.11px;font-size:33.76px;line-height:33.76px;color:#364153;letter-spacing:1.62px;-webkit-text-stroke:0.3px #364153;"><span class="p">3</span></div>
<div class="t" style="left:1287.04px;top:1706.11px;font-size:33.76px;line-height:33.76px;color:#364153;letter-spacing:1.62px;-webkit-text-stroke:0.3px #364153;"><span class="p">7</span><span class="p">4</span></div>
<div class="t" style="left:1470.61px;top:1706.11px;font-size:33.76px;line-height:33.76px;color:#fb2c36;letter-spacing:1.62px;-webkit-text-stroke:0.3px #fb2c36;"><span class="p">0</span></div>
<div class="t" style="left:1676.42px;top:1706.11px;font-size:33.76px;line-height:33.76px;color:#364153;letter-spacing:1.62px;-webkit-text-stroke:0.3px #364153;"><span class="ones" style="margin-left:-2.5px;letter-spacing:-4.28px">1</span><span class="p">6</span><span class="p" style="letter-spacing:-0.78px">,</span><span class="p">0</span><span class="p">0</span><span class="p">0</span><span class="p" style="letter-spacing:-0.78px">.</span><span class="p">0</span><span class="p">0</span></div>
<div class="t" style="left:1965.43px;top:1706.11px;font-size:33.76px;line-height:33.76px;color:#00a63e;letter-spacing:1.62px;-webkit-text-stroke:0.3px #00a63e;text-decoration:underline dotted;text-decoration-thickness:3px;text-underline-offset:2px;"><span class="ones" style="margin-left:-2.5px;letter-spacing:-4.28px">1</span><span class="p" style="letter-spacing:-0.78px">,</span><span class="ones" style="margin-left:-2.5px;letter-spacing:-4.28px">1</span><span class="p">8</span><span class="p">4</span><span class="p" style="letter-spacing:-0.78px">,</span><span class="p">0</span><span class="p">0</span><span class="p">0</span><span class="p" style="letter-spacing:-0.78px">.</span><span class="p">0</span><span class="p">0</span></div>
<div class="t" style="left:2407.80px;top:1706.11px;font-size:33.76px;line-height:33.76px;color:#e17100;letter-spacing:1.62px;-webkit-text-stroke:0.3px #e17100;text-decoration:underline dotted;text-decoration-thickness:3px;text-underline-offset:2px;"><span class="p">0</span><span class="p" style="letter-spacing:-0.78px">.</span><span class="p">0</span><span class="p">0</span></div>
<div class="t" style="left:2606.41px;top:1706.11px;font-size:33.76px;line-height:33.76px;color:#101828;letter-spacing:2.05px;-webkit-text-stroke:0.9px #101828;"><span class="ones" style="margin-left:-2.5px;letter-spacing:-4.28px">1</span><span class="p" style="letter-spacing:-0.80px">,</span><span class="ones" style="margin-left:-2.5px;letter-spacing:-4.28px">1</span><span class="p">8</span><span class="p">4</span><span class="p" style="letter-spacing:-0.80px">,</span><span class="p">0</span><span class="p">0</span><span class="p">0</span><span class="p" style="letter-spacing:-0.80px">.</span><span class="p">0</span><span class="p">0</span></div>
<div style="position:absolute;left:560px;top:1771px;width:2272px;height:2px;background:#e5e7eb"></div>

<svg style="position:absolute;left:0;top:0" width="2880" height="1800" viewBox="0 0 2880 1800">
<circle cx="72" cy="90" r="40" fill="#2563eb"/>
<path d="M55.8,64 H76 C87,64 94.5,70.5 94.5,80.2 C94.5,88.5 89,94.3 81.5,96.2 L96,138 H84 L72,97 H65.8 V110 H55.8 Z M65.8,72.4 V88.4 H76 C81.5,88.4 84.5,85 84.5,80.3 C84.5,75.6 81.5,72.4 76,72.4 Z" fill="#fff" fill-rule="evenodd"/>
<g stroke="#99a1af" stroke-width="2.5" fill="none" stroke-linecap="round" stroke-linejoin="round">
 <circle cx="66" cy="320" r="13.7"/>
 <path d="M61.5,317.5 C61.5,314.5 63.5,313 66,313 C68.7,313 70.5,314.8 70.5,317.2 C70.5,319.8 68.5,320.8 66,321.5 V322.5"/>
</g>
<circle cx="66" cy="327.6" r="1.9" fill="#99a1af"/>
<g stroke="#99a1af" stroke-width="2.5" fill="none" stroke-linecap="round" stroke-linejoin="round">
 <circle cx="59.8" cy="509.3" r="6.9"/>
 <path d="M49.2,522.5 A13,13 0 0 1 70.6,522.5"/>
 <path d="M68.9,503.3 A6.9,6.9 0 1 1 71.6,516.2"/>
 <path d="M72.2,516.4 A13,13 0 0 1 82.6,522.5"/>
</g>
<g stroke="#99a1af" stroke-width="2.5" fill="none" stroke-linecap="round" stroke-linejoin="round">
 <path d="M58,609.5 L66,607 L74,609.5"/>
 <path d="M49.5,614.5 L53,607.5 L58,610 L54,618 Z"/>
 <path d="M82.5,614.5 L79,607.5 L74,610 L78,618 Z"/>
 <path d="M78,618 L70.5,625 L62,622.5 L54,618"/>
 <path d="M74,609.5 H67.5 L62,615 C63.5,617 67,617 69.5,614.5 L72.5,617 L75.5,619"/>
 <path d="M55.5,624 C57.5,626 60,627.3 62.5,627.8"/>
</g>
<g stroke="#99a1af" stroke-width="2.5" fill="none" stroke-linecap="round" stroke-linejoin="round">
 <path d="M49.6,732.7 H82.5"/>
 <path d="M53.6,732.7 V714.5 L66.5,706 H67.1 V732.7"/>
 <path d="M67.1,714.8 H78.4 V732.7"/>
</g>
<g fill="#99a1af">
 <rect x="56.8" y="717.2" width="2.4" height="3.6" rx="1"/><rect x="61.5" y="717.2" width="2.4" height="3.6" rx="1"/>
 <rect x="56.8" y="725" width="2.4" height="3.6" rx="1"/><rect x="61.5" y="725" width="2.4" height="3.6" rx="1"/>
</g>
<g stroke="#99a1af" stroke-width="2.5" fill="none" stroke-linecap="round" stroke-linejoin="round">
 <path d="M57.5,902 H71 A4.75,4.75 0 0 1 71,911.5 H57 A5.25,5.25 0 0 0 57,922 H72.5"/>
 <circle cx="76" cy="922" r="3.5"/>
</g>
<g stroke="#99a1af" stroke-width="2.5" fill="none" stroke-linecap="round" stroke-linejoin="round">
 <circle cx="59" cy="1030" r="3.4"/>
 <circle cx="59" cy="1050" r="3.4"/>
 <circle cx="77.3" cy="1042.4" r="3.4"/>
 <path d="M59,1033.4 V1046.6"/>
 <path d="M60.5,1033.2 C63.5,1038.5 66,1042.4 70,1042.4 H73.9"/>
</g>
<g stroke="#99a1af" stroke-width="2.5" fill="none" stroke-linecap="round" stroke-linejoin="round">
 <path d="M66,1153.5 L79.8,1161 V1175.5 L66,1183 L52.2,1175.5 V1161 Z"/>
 <path d="M52.5,1161 L66,1168 L79.5,1161"/>
 <path d="M66,1168 V1182.5"/>
 <path d="M58.8,1157.3 L72.7,1164.6 V1171.5"/>
</g>
<g stroke="#99a1af" stroke-width="2.5" fill="none" stroke-linecap="round" stroke-linejoin="round">
 <path d="M57.5,1258.8 H74.5 L78.8,1271 L74.8,1283.2 H57.2 L53.2,1271 Z"/>
 <path d="M53.5,1271.2 Q66,1274 78.5,1271.2"/>
 <path d="M66,1272.8 V1283"/>
 <path d="M61.8,1266.3 H70.3"/>
 <path d="M60.5,1284.5 L57.8,1287.8"/>
 <path d="M71.5,1284.5 L74.2,1287.8"/>
</g>
<g stroke="#99a1af" stroke-width="2.5" fill="none" stroke-linecap="round" stroke-linejoin="round">
 <circle cx="66" cy="1376.1" r="13.7"/>
 <path d="M66,1367.3 V1369.3 M66,1382.8 V1384.8"/>
 <path d="M61.8,1382 H68.3 A3,2.9 0 0 0 68.3,1376.1 H63.7 A3,2.85 0 0 1 63.7,1370.4 H70.2"/>
</g>
<g stroke="#fff" stroke-width="2.6" fill="none" stroke-linecap="round" stroke-linejoin="round">
 <circle cx="66" cy="1568" r="13.7"/>
 <path d="M66,1568 V1554.5"/>
 <path d="M77.8,1561.2 L54.2,1574.8"/>
</g>
<g stroke="#99a1af" stroke-width="2.2" fill="none" stroke-linecap="round" stroke-linejoin="round">
 <circle cx="368" cy="1702.6" r="9"/>
 <path d="M354.3,1720 C357.5,1714.5 362.5,1711.6 368,1711.6 C373.5,1711.6 378.5,1714.5 381.7,1720"/>
 <path d="M440.5,1695.5 H432.3 V1719.7 H440.5"/>
 <path d="M440.5,1707.3 H456.5"/>
 <path d="M450.5,1701.3 L456.5,1707.3 L450.5,1713.3"/>
</g>
<g stroke="#364153" stroke-width="2.5" fill="none" stroke-linecap="round">
 <path d="M582.3,57.5 H610.3 M582.3,67.5 H610.3 M582.3,77.5 H610.3"/>
</g>
<g stroke="#99a1af" stroke-width="2.5" fill="none" stroke-linecap="round" stroke-linejoin="round">
 <path d="M2308,58.4 H2323.8"/>
 <path d="M2316,55.8 V58.4"/>
 <path d="M2320.6,58.8 C2319.5,67.5 2314,74 2307.3,76.3"/>
 <path d="M2312.3,63.5 C2313.3,66.8 2315.3,69.3 2318,71"/>
 <path d="M2318.7,79.6 L2325.4,66 L2332,79.6"/>
 <path d="M2321.7,76 H2328.8"/>
</g>
<g stroke="#364153" stroke-width="1.6" fill="none" stroke-linecap="round" stroke-linejoin="round">
 <rect x="596.1" y="393.6" width="19.8" height="19.6" rx="1"/>
 <path d="M601,391.5 V395 M611,391.5 V395 M596.1,399.4 H615.9"/>
</g>
<g stroke="#101828" stroke-width="2" fill="none" stroke-linecap="round" stroke-linejoin="round">
 <path d="M809.3,469.2 L817,476.9 L824.6,469.2"/>
 <path d="M997.3,469.2 L1005,476.9 L1012.6,469.2"/>
</g>
<g stroke="#6a7282" stroke-width="1.9" fill="none" stroke-linecap="round" stroke-linejoin="round">
 <circle cx="2489" cy="490.5" r="10.6"/>
 <path d="M2489,484.3 V490.9 H2495.5"/>
</g>
</svg>
</body></html>
